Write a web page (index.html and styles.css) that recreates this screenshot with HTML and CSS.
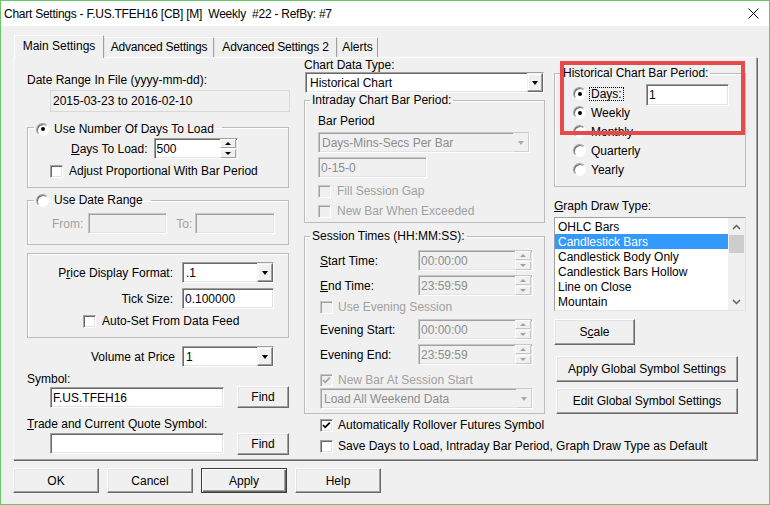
FILE: index.html
```html
<!DOCTYPE html>
<html lang="en">
<head>
    <meta charset="UTF-8">
    <title>Chart Settings</title>
    <link rel="stylesheet" href="styles.css">
</head>
<body>
<div class="window">
    <div class="titlebar">
        <span class="title">Chart Settings - F.US.TFEH16 [CB] [M]  Weekly  #22 - RefBy: #7</span>
        <svg class="close" width="11" height="11" viewBox="0 0 11 11"><path d="M0.5 0.5 L10.5 10.5 M10.5 0.5 L0.5 10.5" stroke="#000" stroke-width="1" fill="none"/></svg>
    </div>

    <div class="dialog">
        <div class="tabs">
            <div class="tab active w-main">Main Settings</div>
            <div class="tab w-adv">Advanced Settings</div>
            <div class="tab w-adv2">Advanced Settings 2</div>
            <div class="tab w-alerts">Alerts</div>
        </div>

        <div class="panel">
            <!-- left column -->
            <div class="col col-left">
                <div>Date Range In File (yyyy-mm-dd):</div>
                <div class="readonly">2015-03-23 to 2016-02-10</div>

                <fieldset class="group grp-days">
                    <legend><span class="opt"><span class="radio on"></span>Use Number Of Days To Load</span></legend>
                    <div class="days-row">
                        <span><u>D</u>ays To Load:</span>
                        <div class="field w-days"><span>500</span><span class="spinner"><span class="spin-btn up"></span><span class="spin-btn down"></span></span></div>
                    </div>
                    <div class="check-row mt5"><span class="check"></span>Adjust Proportional With Bar Period</div>
                </fieldset>

                <fieldset class="group grp-range">
                    <legend><span class="opt"><span class="radio"></span>Use Date Range</span></legend>
                    <div class="range-row">
                        <span class="dim from-lbl">From:</span>
                        <div class="field off w-from"></div>
                        <span class="dim to-lbl">To:</span>
                        <div class="field off w-to"></div>
                    </div>
                </fieldset>

                <div class="box price-box">
                    <span class="lbl">P<u>r</u>ice Display Format:</span>
                    <div class="field select"><span class="val">.1</span><span class="drop"></span></div>
                    <span class="lbl">Tick Size:</span>
                    <div class="field"><span>0.100000</span></div>
                    <div class="check-row auto-set"><span class="check"></span>Auto-Set From Data Feed</div>
                </div>

                <div class="vol-row">
                    <span class="lbl">Volume at Price</span>
                    <div class="field select"><span class="val">1</span><span class="drop"></span></div>
                </div>

                <div class="sym-label">Symbol:</div>
                <div class="sym-row">
                    <div class="field w-sym"><span>F.US.TFEH16</span></div>
                    <button class="btn w-find">Find</button>
                </div>

                <div class="quote-label"><u>T</u>rade and Current Quote Symbol:</div>
                <div class="quote-row">
                    <div class="field w-sym"></div>
                    <button class="btn w-find">Find</button>
                </div>
            </div>

            <!-- middle column -->
            <div class="col col-mid">
                <div class="type-label">Chart Data Type:</div>
                <div class="field select w-type"><span class="val">Historical Chart</span><span class="drop"></span></div>

                <fieldset class="group grp-intraday">
                    <legend>Intraday Chart Bar Period:</legend>
                    <div class="mt7">Bar Period</div>
                    <div class="field select off w-period mt4"><span class="val">Days-Mins-Secs Per Bar</span><span class="drop"></span></div>
                    <div class="field off w-bars mt4"><span>0-15-0</span></div>
                    <div class="check-row dim mt6"><span class="check off"></span>Fill Session Gap</div>
                    <div class="check-row dim mt6"><span class="check off"></span>New Bar When Exceeded</div>
                </fieldset>

                <fieldset class="group grp-session">
                    <legend>Session Times (HH:MM:SS):</legend>
                    <div class="time-row mt7">
                        <span><u>S</u>tart Time:</span>
                        <div class="field off"><span>00:00:00</span><span class="spinner"><span class="spin-btn up"></span><span class="spin-btn down"></span></span></div>
                    </div>
                    <div class="time-row mt4">
                        <span><u>E</u>nd Time:</span>
                        <div class="field off"><span>23:59:59</span><span class="spinner"><span class="spin-btn up"></span><span class="spin-btn down"></span></span></div>
                    </div>
                    <div class="check-row dim mt4 gap5"><span class="check off"></span>Use Evening Session</div>
                    <div class="time-row mt5">
                        <span>Evening Start:</span>
                        <div class="field off"><span>00:00:00</span><span class="spinner"><span class="spin-btn up"></span><span class="spin-btn down"></span></span></div>
                    </div>
                    <div class="time-row mt4">
                        <span>Evening End:</span>
                        <div class="field off"><span>23:59:59</span><span class="spinner"><span class="spin-btn up"></span><span class="spin-btn down"></span></span></div>
                    </div>
                    <div class="check-row dim mt8 gap5"><span class="check off"><svg width="11" height="11" viewBox="0 0 11 11"><path d="M2 5 L4.2 7.3 L8.8 2.6" fill="none" stroke="#a0a0a0" stroke-width="1.7"/></svg></span>New Bar At Session Start</div>
                    <div class="field select off w-weekend mt1"><span class="val">Load All Weekend Data</span><span class="drop"></span></div>
                </fieldset>

                <div class="check-row outside mt4 gap5"><span class="check"><svg width="11" height="11" viewBox="0 0 11 11"><path d="M2 5 L4.2 7.3 L8.8 2.6" fill="none" stroke="#000" stroke-width="1.7"/></svg></span>Automatically Rollover Futures Symbol</div>
                <div class="check-row outside mt7 gap5"><span class="check"></span>Save Days to Load, Intraday Bar Period, Graph Draw Type as Default</div>
            </div>

            <!-- right column -->
            <div class="col col-right">
                <fieldset class="group grp-hist">
                    <legend>Historical Chart Bar Period:</legend>
                    <div class="radio-row mt4">
                        <span class="radio on"></span><span class="focus">Days:</span>
                        <div class="field w-bar-days"><span>1</span></div>
                    </div>
                    <div class="radio-row"><span class="radio on"></span>Weekly</div>
                    <div class="radio-row"><span class="radio"></span>Monthly</div>
                    <div class="radio-row"><span class="radio"></span>Quarterly</div>
                    <div class="radio-row"><span class="radio"></span>Yearly</div>
                </fieldset>

                <div class="draw-label"><u>G</u>raph Draw Type:</div>
                <div class="listbox">
                    <div class="list-items">
                        <div class="item">OHLC Bars</div>
                        <div class="item selected">Candlestick Bars</div>
                        <div class="item">Candlestick Body Only</div>
                        <div class="item">Candlestick Bars Hollow</div>
                        <div class="item">Line on Close</div>
                        <div class="item">Mountain</div>
                    </div>
                    <div class="scrollbar">
                        <span class="arrow"><svg width="9" height="6" viewBox="0 0 9 6"><path d="M1 5 L4.5 1.5 L8 5" fill="none" stroke="#606060" stroke-width="1.5"/></svg></span>
                        <span class="thumb"></span>
                        <span class="track"></span>
                        <span class="arrow"><svg width="9" height="6" viewBox="0 0 9 6"><path d="M1 1 L4.5 4.5 L8 1" fill="none" stroke="#606060" stroke-width="1.5"/></svg></span>
                    </div>
                </div>

                <button class="btn w-scale">S<u>c</u>ale</button>
                <button class="btn w-global mt11">Apply Global Symbol Settings</button>
                <button class="btn w-global mt6">Edit Global Symbol Settings</button>
            </div>
        </div>

        <div class="buttons">
            <button class="btn w-dlg">OK</button>
            <button class="btn w-dlg">Cancel</button>
            <button class="btn w-dlg default">Apply</button>
            <button class="btn w-dlg">Help</button>
        </div>
    </div>

    <div class="highlight"></div>
</div>
</body>
</html>
```

FILE: styles.css
```css
* {
    box-sizing: border-box;
}

body {
    margin: 0;
    font-family: "Liberation Sans", Arial, sans-serif;
    font-size: 12px;
    line-height: 14px;
    color: #000;
    background: #f0f0f0;
}

u {
    text-decoration: underline;
    text-underline-offset: 1px;
}

.window {
    position: relative;
    width: 770px;
    height: 505px;
    border: 1px solid #6cc46c;
    background: #f0f0f0;
    overflow: hidden;
}

/* title bar */
.titlebar {
    height: 25px;
    background: #fff;
    display: flex;
    align-items: center;
    padding-left: 3px;
}

.title {
    white-space: pre;
    letter-spacing: -0.25px;
}

.close {
    margin-left: auto;
    margin-right: 10px;
}

.dialog {
    padding: 9px 12px 0;
}

/* tabs */
.tabs {
    display: flex;
    align-items: flex-end;
    height: 23px;
    margin-left: 1px;
    margin-bottom: -1px;
    position: relative;
    z-index: 1;
}

.tab {
    height: 20px;
    margin-bottom: 1px;
    line-height: 19px;
    text-align: center;
    white-space: nowrap;
    background: #f0f0f0;
    border: 1px solid;
    border-color: #fff #a0a0a0 transparent #e3e3e3;
    border-bottom: none;
}

.tab.active {
    height: 23px;
    margin-bottom: 0;
    line-height: 21px;
    border-left-color: #fff;
}

.w-main { width: 90px; }
.w-adv { width: 110px; letter-spacing: -0.2px; }
.w-adv2 { width: 123px; letter-spacing: -0.2px; }
.w-alerts { width: 41px; }

/* tab panel */
.panel {
    height: 403px;
    display: flex;
    align-items: flex-start;
    padding-left: 13px;
    border: 1px solid;
    border-color: #fff #a0a0a0 #a0a0a0 #fff;
    box-shadow: 1px 1px 0 #696969;
}

.col {
    display: flex;
    flex-direction: column;
    align-items: flex-start;
}

.col-left {
    width: 262px;
    margin-top: 15px;
}

.col-mid {
    width: 241px;
    margin-left: 15px;
    margin-top: 1px;
}

.col-right {
    width: 192px;
    margin-left: 9px;
    margin-top: 8px;
}

/* spacing helpers */
.mt1 { margin-top: 1px; }
.mt4 { margin-top: 4px; }
.mt5 { margin-top: 5px; }
.mt6 { margin-top: 6px; }
.mt7 { margin-top: 7px; }
.mt8 { margin-top: 8px; }
.mt11 { margin-top: 11px; }

.dim {
    color: #a0a0a0;
}

/* group boxes */
.group {
    margin: 0;
    padding: 0;
    min-width: 0;
    width: 100%;
    border: 1px solid #bcbcbc;
    box-shadow: inset 1px 1px 0 #fff;
}

.group legend {
    padding: 0 2px;
    line-height: 14px;
    height: 14px;
    white-space: nowrap;
}

.opt {
    display: inline-flex;
    align-items: center;
    gap: 5px;
}

.box {
    border: 1px solid #bcbcbc;
    box-shadow: inset 1px 1px 0 #fff;
    width: 100%;
}

/* radios and checkboxes */
.radio {
    width: 13px;
    height: 13px;
    flex: none;
    border-radius: 50%;
    background: #fff;
    border: 1px solid;
    border-color: #a0a0a0 #fff #fff #a0a0a0;
    box-shadow: inset 1px 1px 0 #696969;
    display: inline-flex;
    align-items: center;
    justify-content: center;
}

.radio.on::after {
    content: "";
    width: 4px;
    height: 4px;
    border-radius: 50%;
    background: #000;
}

.check {
    width: 13px;
    height: 13px;
    flex: none;
    background: #fff;
    border: 1px solid;
    border-color: #a0a0a0 #fff #fff #a0a0a0;
    box-shadow: inset 1px 1px 0 #696969, inset -1px -1px 0 #e3e3e3;
    display: inline-flex;
    align-items: center;
    justify-content: center;
}

.check.off {
    background: #f0f0f0;
    border-color: #c8c8c8 #fff #fff #c8c8c8;
    box-shadow: inset 1px 1px 0 #a0a0a0;
}

.check-row {
    display: flex;
    align-items: center;
    gap: 6px;
    height: 14px;
    white-space: nowrap;
}

.gap5 {
    gap: 5px;
}

/* edit fields */
.field {
    height: 21px;
    display: flex;
    align-items: center;
    padding-left: 2px;
    background: #fff;
    border: 1px solid;
    border-color: #a0a0a0 #fff #fff #a0a0a0;
    box-shadow: inset 1px 1px 0 #696969, inset -1px -1px 0 #e3e3e3;
    white-space: nowrap;
}

.field.off {
    background: #f0f0f0;
    color: #8d8d8d;
    border-color: #c8c8c8 #fff #fff #c8c8c8;
    box-shadow: inset 1px 1px 0 #a0a0a0, inset -1px -1px 0 #e3e3e3;
}

.readonly {
    margin: 3px 0 0 23px;
    width: 240px;
    height: 22px;
    padding-left: 2px;
    line-height: 20px;
    border: 1px solid #d9d9d9;
}

.spinner {
    width: 16px;
    height: 19px;
    margin-left: auto;
    margin-right: 1px;
    display: flex;
    flex-direction: column;
    gap: 1px;
}

.spin-btn {
    flex: 1;
    display: flex;
    align-items: center;
    justify-content: center;
    background: #f0f0f0;
    border: 1px solid;
    border-color: #fff #a0a0a0 #a0a0a0 #fff;
}

.spin-btn::after {
    content: "";
    border-left: 3px solid transparent;
    border-right: 3px solid transparent;
}

.spin-btn.up::after {
    border-bottom: 3px solid #000;
}

.spin-btn.down::after {
    border-top: 3px solid #000;
}

.off .spin-btn {
    border-color: #fff #c8c8c8 #c8c8c8 #fff;
}

.off .spin-btn.up::after {
    border-bottom-color: #a0a0a0;
}

.off .spin-btn.down::after {
    border-top-color: #a0a0a0;
}

/* drop-down lists */
.select {
    padding-right: 0;
}

.select .val {
    padding-left: 1px;
}

.drop {
    width: 16px;
    height: 19px;
    margin-left: auto;
    display: flex;
    align-items: center;
    justify-content: center;
    background: #f0f0f0;
    border: 1px solid;
    border-color: #f0f0f0 #696969 #696969 #f0f0f0;
    box-shadow: inset -1px -1px 0 #a0a0a0, inset 1px 1px 0 #fff;
}

.drop::after {
    content: "";
    border-left: 3.5px solid transparent;
    border-right: 3.5px solid transparent;
    border-top: 4px solid #000;
}

.select.off .drop {
    border-color: #f0f0f0 #d0d0d0 #d0d0d0 #f0f0f0;
    box-shadow: none;
}

.select.off .drop::after {
    border-top-color: #a8a8a8;
}

/* buttons */
.btn {
    font: inherit;
    color: #000;
    padding: 0;
    height: 26px;
    background: #f0f0f0;
    border: 1px solid;
    border-color: #fff #696969 #696969 #fff;
    box-shadow: inset -1px -1px 0 #a0a0a0, inset 1px 1px 0 #e3e3e3;
    white-space: nowrap;
}

.btn.default {
    border-color: #3c3c3c;
    box-shadow: inset 1px 1px 0 #fff, inset -1px -1px 0 #696969, inset -2px -2px 0 #a0a0a0;
}

/* left column */
.grp-days {
    margin-top: 8px;
    padding: 0 0 9px 22px;
}

.grp-days legend,
.grp-range legend {
    margin-left: -16px;
    padding: 0 8px 0 2px;
}

.days-row {
    display: flex;
    align-items: center;
    gap: 6px;
    margin: 4px 0 0 21px;
}

.w-days { width: 84px; }

.grp-range {
    margin-top: 5px;
    padding: 0 0 10px 22px;
}

.range-row {
    display: flex;
    align-items: center;
    margin-top: 6px;
}

.from-lbl { margin: 0 5px 0 2px; }
.to-lbl { margin: 0 3px 0 9px; }
.w-from { width: 79px; }
.w-to { width: 80px; }

.price-box {
    margin-top: 8px;
    padding: 8px 0 9px;
    display: grid;
    grid-template-columns: 145px 92px;
    column-gap: 9px;
    row-gap: 5px;
    align-items: center;
}

.lbl {
    justify-self: end;
    white-space: nowrap;
}

.auto-set {
    grid-column: 1 / span 2;
    margin-left: 55px;
}

.vol-row {
    width: 100%;
    margin-top: 8px;
    display: grid;
    grid-template-columns: 148px 92px;
    column-gap: 7px;
    align-items: center;
}

.sym-label {
    margin-top: 5px;
}

.sym-row,
.quote-row {
    display: flex;
    align-items: flex-start;
    margin-left: 23px;
}

.sym-row {
    margin-top: 0;
}

.sym-row .field {
    margin-top: 1px;
}

.quote-label {
    margin-top: 9px;
}

.quote-row {
    margin-top: 2px;
}

.w-sym { width: 174px; }

.w-find {
    width: 52px;
    height: 22px;
    margin-left: 13px;
}

/* middle column */
.type-label {
    height: 13px;
    line-height: 13px;
    white-space: nowrap;
}

.w-type {
    width: 239px;
    margin-left: 1px;
}

.w-type .val {
    padding-left: 2px;
}

.grp-intraday {
    padding: 0 0 4px 13px;
}

.grp-intraday legend {
    margin-left: -8px;
}

.w-period { width: 212px; }
.w-bars { width: 109px; }

.grp-session {
    margin-top: 6px;
    padding: 0 0 4px 15px;
}

.grp-session legend {
    margin-left: -10px;
}

.time-row {
    display: grid;
    grid-template-columns: 98px 115px;
    align-items: center;
}

.w-weekend { width: 213px; }

.outside {
    margin-left: 16px;
}

/* right column */
.grp-hist {
    padding: 0 0 7px 18px;
}

.grp-hist legend {
    margin-left: -12px;
}

.radio-row {
    display: flex;
    align-items: center;
    gap: 5px;
    height: 19px;
}

.focus {
    margin-left: -2px;
    padding: 0 1px;
    line-height: 12px;
    border: 1px dotted #000;
}

.w-bar-days {
    width: 83px;
    height: 22px;
    margin: 0 16px -3px auto;
    align-self: flex-start;
}

.draw-label {
    margin-top: 12px;
}

.listbox {
    margin-top: 4px;
    width: 192px;
    height: 94px;
    display: flex;
    background: #fff;
    border: 1px solid;
    border-color: #a0a0a0 #e3e3e3 #e3e3e3 #a0a0a0;
}

.list-items {
    flex: 1;
    padding-top: 1px;
}

.item {
    height: 15px;
    line-height: 16px;
    padding-left: 3px;
    white-space: nowrap;
}

.item.selected {
    background: #3399ff;
    color: #fff;
}

.scrollbar {
    width: 17px;
    display: flex;
    flex-direction: column;
    background: #f0f0f0;
}

.arrow {
    height: 17px;
    display: flex;
    align-items: center;
    justify-content: center;
}

.thumb {
    height: 18px;
    margin: 0 1px;
    background: #cdcdcd;
}

.track {
    flex: 1;
}

.w-scale {
    width: 81px;
    margin-top: 8px;
}

.w-global {
    width: 182px;
    margin-left: 2px;
}

/* bottom buttons */
.buttons {
    display: flex;
    gap: 8px;
    margin-top: 8px;
}

.w-dlg {
    width: 86px;
    height: 25px;
}

/* annotation box drawn over the dialog */
.highlight {
    position: absolute;
    left: 559px;
    top: 60px;
    width: 185px;
    height: 74px;
    border: 4px solid #e64a4a;
    pointer-events: none;
}
```
